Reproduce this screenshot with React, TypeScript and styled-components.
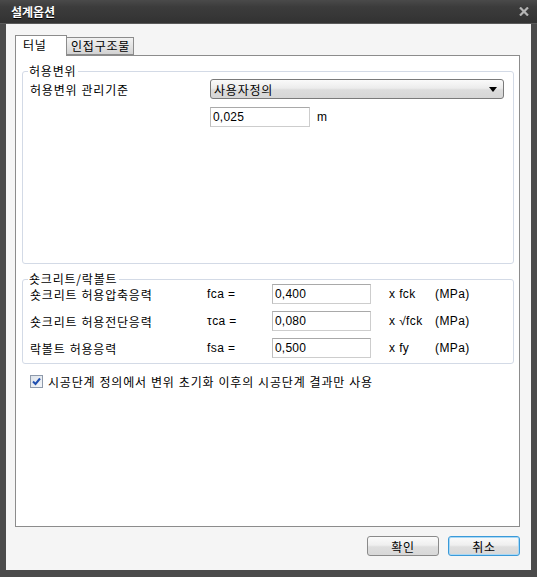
import styled, { createGlobalStyle } from 'styled-components';

const GlobalStyle = createGlobalStyle`
  html, body {
    margin: 0;
    padding: 0;
    background: #4b4b4b;
  }
  body {
    font-family: "Liberation Sans", "Noto Sans CJK KR", sans-serif;
    font-size: 12px;
    letter-spacing: 0.8px;
    color: #000;
  }
`;

const Window = styled.div`
  width: 537px;
  height: 577px;
  display: flex;
  flex-direction: column;
  background: #4b4b4b;
  box-sizing: border-box;
`;

const TitleBar = styled.div`
  height: 24px;
  flex: none;
  display: flex;
  align-items: center;
  justify-content: space-between;
  padding: 0 8px 0 11px;
  background: linear-gradient(#4a4a4a 0%, #3c3c3c 30%, #323232 100%);
  border-bottom: 1px solid #5a5a5a;
  box-sizing: border-box;
`;

const Title = styled.span`
  color: #fff;
  font-family: "Noto Sans CJK KR", sans-serif;
  font-weight: 700;
  font-size: 12px;
  letter-spacing: 0;
  text-shadow: 0 1px 0 #000;
`;

const CloseIcon = styled.svg`
  display: block;
`;

const Body = styled.div`
  flex: 1;
  margin: 0 6px 7px 6px;
  background: #f5f5f5;
  padding: 11px 11px 14px 9px;
  display: flex;
  flex-direction: column;
  box-sizing: border-box;
`;

const TabRow = styled.div`
  height: 20px;
  display: flex;
  align-items: flex-end;
`;

const Tab = styled.div<{ $active?: boolean }>`
  position: relative;
  z-index: ${(p) => (p.$active ? 1 : 0)};
  height: ${(p) => (p.$active ? '21px' : '18px')};
  margin-bottom: ${(p) => (p.$active ? '-1px' : '0')};
  padding: ${(p) => (p.$active ? '2px 0 0 7px' : '0 0 0 4px')};
  display: flex;
  align-items: ${(p) => (p.$active ? 'flex-start' : 'center')};
  border: 1px solid #8c8c8c;
  border-bottom: ${(p) => (p.$active ? 'none' : '1px solid #8c8c8c')};
  border-left: ${(p) => (p.$active ? '1px solid #8c8c8c' : 'none')};
  background: ${(p) =>
    p.$active ? '#fff' : 'linear-gradient(#f2f2f2 0%, #e2e2e2 55%, #d2d2d2 100%)'};
  box-sizing: border-box;
  width: ${(p) => (p.$active ? '52px' : '67px')};
  font-family: "Noto Sans CJK KR", sans-serif;
  font-size: 12px;
  line-height: 14px;
  white-space: nowrap;
`;

const Panel = styled.div`
  flex: 1;
  background: #fff;
  border: 1px solid #8c8c8c;
  padding: 9px 5px 0 6px;
  box-sizing: border-box;
  display: flex;
  flex-direction: column;
`;

const Group = styled.fieldset<{ $top?: number }>`
  margin: ${(p) => p.$top ?? 0}px 0 0 0;
  padding: 0 7px;
  border: 1px solid #d3dae6;
  border-radius: 3px;
  min-inline-size: 0;
`;

const Legend = styled.legend`
  padding: 0 2px 0 1px;
  margin-left: -2px;
  line-height: 12px;
  font-family: "Noto Sans CJK KR", sans-serif;
  font-size: 12px;
`;

const GroupBody = styled.div<{ $height: number }>`
  height: ${(p) => p.$height}px;
  box-sizing: border-box;
  display: flex;
  flex-direction: column;
`;

const LimitRow = styled.div<{ $top?: number }>`
  display: grid;
  grid-template-columns: 180px 100px 1fr;
  align-items: center;
  height: 20px;
  margin-top: ${(p) => p.$top ?? 0}px;
`;

const StressRow = styled.div<{ $top?: number }>`
  display: grid;
  grid-template-columns: 177px 65px 99px 64px auto;
  align-items: center;
  height: 20px;
  margin-top: ${(p) => p.$top ?? 0}px;
`;

const Label = styled.span`
  font-size: 12px;
  white-space: nowrap;
`;

const Unit = styled.span<{ $indent?: number }>`
  padding-left: ${(p) => p.$indent ?? 0}px;
  font-size: 12px;
  letter-spacing: 0.4px;
  white-space: nowrap;
`;

const Select = styled.div`
  grid-column: 2 / span 2;
  width: 294px;
  height: 20px;
  box-sizing: border-box;
  border: 1px solid #7a7a7a;
  border-radius: 3px;
  background: linear-gradient(#fafafa 0%, #ececec 45%, #dcdcdc 55%, #d6d6d6 100%);
  display: flex;
  align-items: center;
  justify-content: space-between;
  padding: 0 6px 0 3px;
  font-size: 12px;
`;

const Arrow = styled.span`
  width: 0;
  height: 0;
  border-left: 4px solid transparent;
  border-right: 4px solid transparent;
  border-top: 5px solid #000;
`;

const Input = styled.div`
  height: 20px;
  box-sizing: border-box;
  border: 1px solid #cdcdcd;
  border-top-color: #a9a9a9;
  border-left-color: #bdbdbd;
  background: #fff;
  display: flex;
  align-items: center;
  padding: 0 2px;
  font-size: 12px;
  letter-spacing: 0.2px;
`;

const CheckRow = styled.div`
  display: flex;
  align-items: center;
  gap: 5px;
  height: 14px;
  margin: 10px 0 0 8px;
  font-size: 12px;
`;

const CheckMark = styled.span`
  width: 13px;
  height: 13px;
  flex: none;
  box-sizing: border-box;
  border: 1px solid #8e9aab;
  background: linear-gradient(135deg, #dde3ea 0%, #f4f6f9 100%);
  display: flex;
  align-items: center;
  justify-content: center;
`;

const Footer = styled.div`
  margin-top: 9px;
  display: flex;
  justify-content: flex-end;
  gap: 9px;
`;

const Button = styled.button<{ $focused?: boolean }>`
  width: 72px;
  height: 20px;
  padding: 0;
  border: 1px solid ${(p) => (p.$focused ? '#3a9ad9' : '#8a8a8a')};
  border-radius: 3px;
  background: linear-gradient(#fbfbfb 0%, #efefef 45%, #dedede 55%, #d8d8d8 100%);
  box-shadow: ${(p) => (p.$focused ? 'inset 0 0 0 1px #a9d8f5' : 'none')};
  font-family: "Noto Sans CJK KR", sans-serif;
  font-size: 12px;
  letter-spacing: 0.8px;
  color: #000;
`;

export default function App() {
  return (
    <Window>
      <GlobalStyle />
      <TitleBar>
        <Title>설계옵션</Title>
        <CloseIcon width="10" height="9" viewBox="0 0 10 9">
          <path d="M1 0.5 L9 8.5 M9 0.5 L1 8.5" stroke="#b5b5b5" strokeWidth="2.2" />
        </CloseIcon>
      </TitleBar>
      <Body>
        <TabRow>
          <Tab $active>터널</Tab>
          <Tab>인접구조물</Tab>
        </TabRow>
        <Panel>
          <Group>
            <Legend>허용변위</Legend>
            <GroupBody $height={186}>
              <LimitRow $top={2}>
                <Label>허용변위 관리기준</Label>
                <Select>
                  <span>사용자정의</span>
                  <Arrow />
                </Select>
              </LimitRow>
              <LimitRow $top={8}>
                <span />
                <Input>0,025</Input>
                <Unit $indent={7}>m</Unit>
              </LimitRow>
            </GroupBody>
          </Group>
          <Group $top={9}>
            <Legend>숏크리트/락볼트</Legend>
            <GroupBody $height={78}>
              <StressRow $top={-1}>
                <Label>숏크리트 허용압축응력</Label>
                <Unit>fca =</Unit>
                <Input>0,400</Input>
                <Unit $indent={18}>x fck</Unit>
                <Unit>(MPa)</Unit>
              </StressRow>
              <StressRow $top={7}>
                <Label>숏크리트 허용전단응력</Label>
                <Unit>τca =</Unit>
                <Input>0,080</Input>
                <Unit $indent={18}>x √fck</Unit>
                <Unit>(MPa)</Unit>
              </StressRow>
              <StressRow $top={7}>
                <Label>락볼트 허용응력</Label>
                <Unit>fsa =</Unit>
                <Input>0,500</Input>
                <Unit $indent={18}>x fy</Unit>
                <Unit>(MPa)</Unit>
              </StressRow>
            </GroupBody>
          </Group>
          <CheckRow>
            <CheckMark>
              <svg width="9" height="9" viewBox="0 0 9 9">
                <path d="M1 4.5 L3.5 7 L8 1.5" fill="none" stroke="#1f4fb0" strokeWidth="2" />
              </svg>
            </CheckMark>
            <span>시공단계 정의에서 변위 초기화 이후의 시공단계 결과만 사용</span>
          </CheckRow>
        </Panel>
        <Footer>
          <Button>확인</Button>
          <Button $focused>취소</Button>
        </Footer>
      </Body>
    </Window>
  );
}
